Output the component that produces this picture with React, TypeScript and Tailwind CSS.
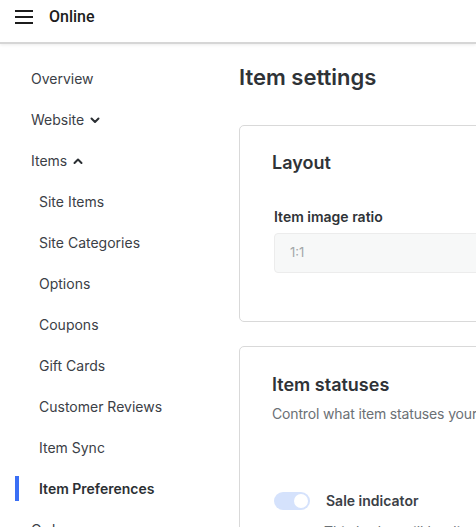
import React from 'react'

const font = { fontFamily: 'Inter, "Noto Sans", sans-serif' }

function Chevron({ up }: { up?: boolean }) {
  return (
    <svg width="10" height="10" viewBox="0 0 10 10" className="ml-[6px]">
      <polyline
        points={up ? '1.5,7 5,3.5 8.5,7' : '1.5,3.5 5,7 8.5,3.5'}
        fill="none"
        stroke="#2b2f33"
        strokeWidth="2"
        strokeLinecap="round"
        strokeLinejoin="round"
      />
    </svg>
  )
}

const subItems = [
  'Site Items',
  'Site Categories',
  'Options',
  'Coupons',
  'Gift Cards',
  'Customer Reviews',
  'Item Sync',
]

export default function App() {
  return (
    <div className="w-[476px] h-[527px] overflow-hidden bg-white" style={font}>
      <header className="h-[44px] flex items-center pb-[8px] border-b-2 border-[#d6d6d6] shadow-[0_1px_3px_rgba(0,0,0,0.08)]">
        <svg width="18" height="14" viewBox="0 0 18 14" className="ml-[15px]">
          <path d="M0 1h18M0 7h18M0 13h18" stroke="#1c1c1c" strokeWidth="2" />
        </svg>
        <span
          className="ml-[16px] text-[16px] font-medium text-[#1c1c1c]"
          style={{ fontFamily: 'Roboto, "Liberation Sans", sans-serif' }}
        >
          Online
        </span>
      </header>

      <div className="flex">
        <nav className="w-[239px] shrink-0 pt-[14px] text-[14px] text-[#3b4046]">
          <div className="h-[41px] flex items-center pl-[31px]">Overview</div>
          <div className="h-[41px] flex items-center pl-[31px]">
            Website
            <Chevron />
          </div>
          <div className="h-[41px] flex items-center pl-[31px]">
            Items
            <Chevron up />
          </div>
          {subItems.map((s) => (
            <div key={s} className="h-[41px] flex items-center pl-[39px]">
              {s}
            </div>
          ))}
          <div className="h-[41px] flex items-center relative pl-[39px] font-semibold text-[#2b2f33]">
            <span className="absolute left-[15px] top-[8px] w-[4px] h-[25px] bg-[#3a6ff5]" />
            Item Preferences
          </div>
          <div className="h-[41px] flex items-center pl-[31px]">Orders</div>
        </nav>

        <main className="w-[640px] shrink-0 pt-[18px]">
          <h1 className="text-[22px] leading-[30px] font-semibold text-[#2f3337] mb-[33px]">
            Item settings
          </h1>

          <section className="border border-[#d9d9d9] rounded-[5px] h-[197px] pl-[32px] pt-[24px]">
            <h2 className="text-[18px] leading-[26px] font-semibold text-[#2f3337]">Layout</h2>
            <div className="pl-[2px] mt-[31px]">
              <p className="text-[14px] leading-[20px] font-semibold text-[#2f3337]">Item image ratio</p>
              <div className="mt-[6px] h-[40px] w-[500px] rounded-[4px] border border-[#ececec] bg-[#f7f8f8] flex items-center pl-[15px] text-[13px] text-[#a3a6a9]">
                1:1
              </div>
            </div>
          </section>

          <section className="mt-[24px] border border-[#d9d9d9] rounded-[5px] pl-[32px] pt-[25px] pb-[40px]">
            <h2 className="text-[18px] leading-[26px] font-semibold text-[#2f3337]">Item statuses</h2>
            <p className="mt-[6px] text-[14px] leading-[20px] tracking-[-0.15px] text-[#6b7075]">
              Control what item statuses your customers see on your site.
            </p>
            <div className="mt-[66px] flex items-center pl-[2px]">
              <div className="w-[36px] h-[18px] rounded-full bg-[#d5e2fc] flex items-center justify-end pr-[2px]">
                <div className="w-[14px] h-[14px] rounded-full bg-white" />
              </div>
              <span className="ml-[16px] text-[14px] font-semibold text-[#3b4046]">Sale indicator</span>
            </div>
            <p className="mt-[11px] pl-[52px] text-[14px] leading-[20px] text-[#6b7075]">
              This badge will be displayed on items that are on sale.
            </p>
          </section>
        </main>
      </div>
    </div>
  )
}
